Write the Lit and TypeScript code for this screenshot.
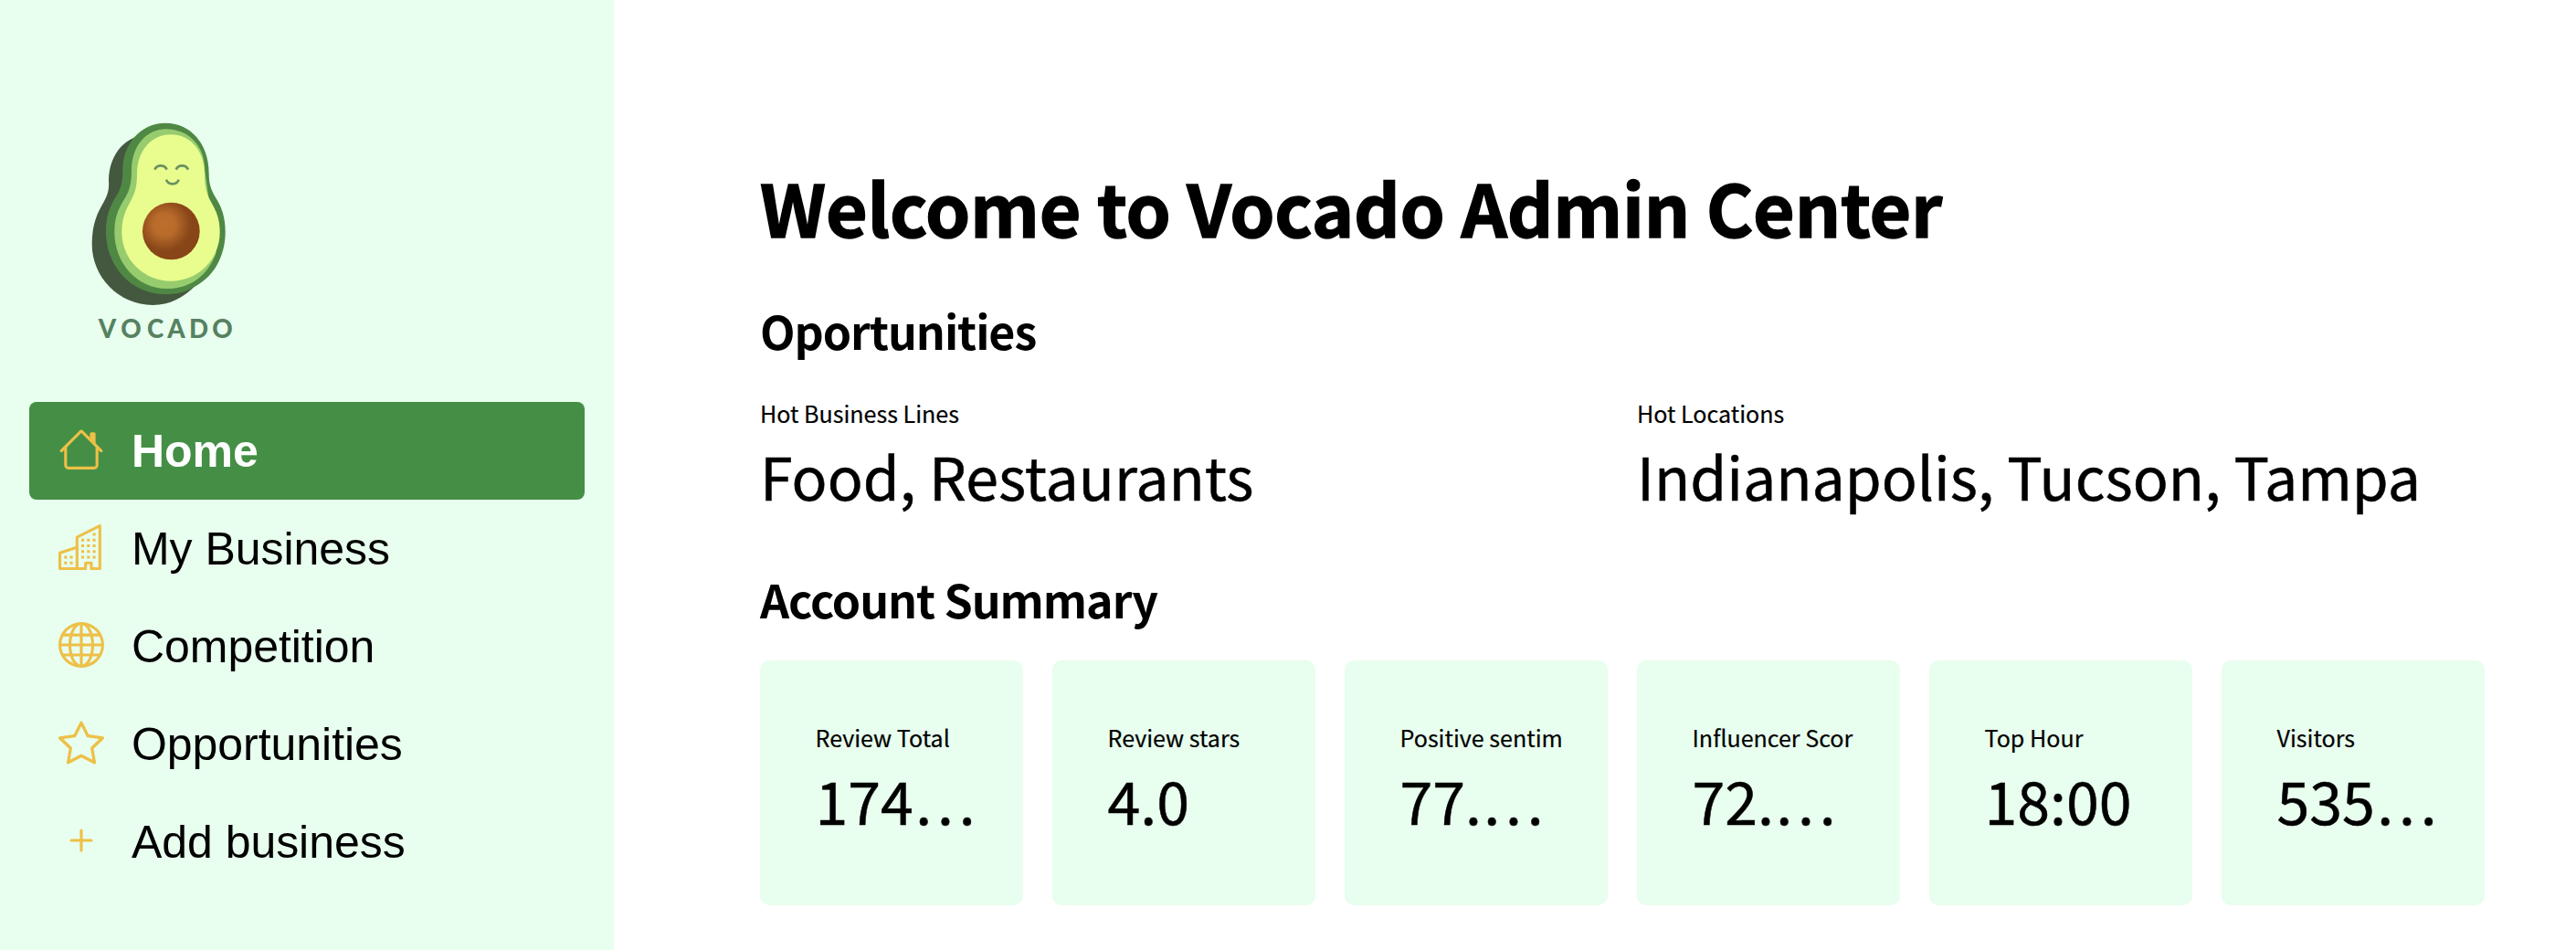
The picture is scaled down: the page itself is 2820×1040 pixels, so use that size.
import { LitElement, html, css, svg, nothing } from "lit";
import { customElement, property } from "lit/decorators.js";
import { classMap } from "lit/directives/class-map.js";

const ICONS: Record<string, string[]> = {
  house: [
    "M2 13.5V7h1v6.5a.5.5 0 0 0 .5.5h9a.5.5 0 0 0 .5-.5V7h1v6.5a1.5 1.5 0 0 1-1.5 1.5h-9A1.5 1.5 0 0 1 2 13.5zm11-11V6l-2-2V2.5a.5.5 0 0 1 .5-.5h1a.5.5 0 0 1 .5.5z",
    "M7.293 1.5a1 1 0 0 1 1.414 0l6.647 6.646a.5.5 0 0 1-.708.708L8 2.207 1.354 8.854a.5.5 0 1 1-.708-.708L7.293 1.5z",
  ],
  building: [
    "M14.763.075A.5.5 0 0 1 15 .5v15a.5.5 0 0 1-.5.5h-3a.5.5 0 0 1-.5-.5V14h-1v1.5a.5.5 0 0 1-.5.5h-9a.5.5 0 0 1-.5-.5V10a.5.5 0 0 1 .342-.474L6 7.64V4.5a.5.5 0 0 1 .276-.447l8-4a.5.5 0 0 1 .487.022zM6 8.694 1 10.36V15h5V8.694zM7 15h2v-1.5a.5.5 0 0 1 .5-.5h2a.5.5 0 0 1 .5.5V15h2V1.309l-7 3.5V15z",
    "M2 11h1v1H2v-1zm2 0h1v1H4v-1zm-2 2h1v1H2v-1zm2 0h1v1H4v-1zm4-4h1v1H8V9zm2 0h1v1h-1V9zm-2 2h1v1H8v-1zm2 0h1v1h-1v-1zm2-2h1v1h-1V9zm0 2h1v1h-1v-1zM8 7h1v1H8V7zm2 0h1v1h-1V7zm2 0h1v1h-1V7zM8 5h1v1H8V5zm2 0h1v1h-1V5zm2 0h1v1h-1V5zm0-2h1v1h-1V3z",
  ],
  globe: [
    "M0 8a8 8 0 1 1 16 0A8 8 0 0 1 0 8zm7.5-6.923c-.67.204-1.335.82-1.887 1.855A7.97 7.97 0 0 0 5.145 4H7.5V1.077zM4.09 4a9.267 9.267 0 0 1 .64-1.539 6.7 6.7 0 0 1 .597-.933A7.025 7.025 0 0 0 2.255 4H4.09zm-.582 3.5c.03-.877.138-1.718.312-2.5H1.674a6.958 6.958 0 0 0-.656 2.5h2.49zM4.847 5a12.5 12.5 0 0 0-.338 2.5H7.5V5H4.847zM8.5 5v2.5h2.99a12.495 12.495 0 0 0-.337-2.5H8.5zM4.51 8.5a12.5 12.5 0 0 0 .337 2.5H7.5V8.5H4.51zm3.99 0V11h2.653c.187-.765.306-1.608.338-2.5H8.5zM5.145 12c.138.386.295.744.468 1.068.552 1.035 1.218 1.65 1.887 1.855V12H5.145zm.182 2.472a6.696 6.696 0 0 1-.597-.933A9.268 9.268 0 0 1 4.09 12H2.255a7.024 7.024 0 0 0 3.072 2.472zM3.82 11a13.652 13.652 0 0 1-.312-2.5h-2.49c.062.89.291 1.733.656 2.5H3.82zm6.853 3.472A7.024 7.024 0 0 0 13.745 12H11.91a9.27 9.27 0 0 1-.64 1.539 6.688 6.688 0 0 1-.597.933zM8.5 12v2.923c.67-.204 1.335-.82 1.887-1.855.173-.324.33-.682.468-1.068H8.5zm3.68-1h2.146c.365-.767.594-1.61.656-2.5h-2.49a13.65 13.65 0 0 1-.312 2.5zm2.802-3.5a6.959 6.959 0 0 0-.656-2.5H12.18c.174.782.282 1.623.312 2.5h2.49zM11.27 2.461c.247.464.462.98.64 1.539h1.835a7.024 7.024 0 0 0-3.072-2.472c.218.284.418.598.597.933zM10.855 4a7.966 7.966 0 0 0-.468-1.068C9.835 1.897 9.17 1.282 8.5 1.077V4h2.355z",
  ],
  star: [
    "M2.866 14.85c-.078.444.36.791.746.593l4.39-2.256 4.389 2.256c.386.198.824-.149.746-.592l-.83-4.73 3.522-3.356c.33-.314.16-.888-.282-.95l-4.898-.696L8.465.792a.513.513 0 0 0-.927 0L5.354 5.12l-4.898.696c-.441.062-.612.636-.283.95l3.523 3.356-.83 4.73zm4.905-2.767-3.686 1.894.694-3.957a.565.565 0 0 0-.163-.505L1.71 6.745l4.052-.576a.525.525 0 0 0 .393-.288L8 2.223l1.847 3.658a.525.525 0 0 0 .393.288l4.052.575-2.906 2.77a.565.565 0 0 0-.163.506l.694 3.957-3.686-1.894a.503.503 0 0 0-.461 0z",
  ],
  plus: [
    "M8 4a.5.5 0 0 1 .5.5v3h3a.5.5 0 0 1 0 1h-3v3a.5.5 0 0 1-1 0v-3h-3a.5.5 0 0 1 0-1h3v-3A.5.5 0 0 1 8 4z",
  ],
};

@customElement("vocado-logo")
class VocadoLogo extends LitElement {
  static styles = css`
    :host { display: block; width: 200px; height: 270px; }
    .art { display: block; width: 200px; height: 270px; }
    .word {
      font-family: Lato, "Liberation Sans", sans-serif;
      font-weight: 900;
      font-size: 83px;
      fill: #558160;
    }
  `;
  render() {
    return html`<svg class="art" viewBox="0 0 600 810">
      <defs>
        <radialGradient id="pit" cx="300" cy="378" r="96" gradientUnits="userSpaceOnUse">
          <stop offset="0" stop-color="#bd6f2d" />
          <stop offset="0.38" stop-color="#b86b2a" />
          <stop offset="0.88" stop-color="#8a4719" />
          <stop offset="1" stop-color="#884517" />
        </radialGradient>
      </defs>
      <path fill="#445840" d="M250 82C180 82 117 140 117 235C119 268 112 284 96 312C76 346 62 385 62 442C62 550 150 642 262 642C318 642 362 618 400 580L440 300Z" />
      <path fill="#4f8844" d="M303 44C222 44 163 112 163 200C163 250 152 268 137 292C120 322 108 350 108 402C108 512 190 606 300 606C345 606 375 598 405 578C465 545 500 478 500 402C500 352 488 322 470 292C452 262 446 244 446 208C446 112 386 44 303 44Z" />
      <path fill="#97cc6e" d="M306 64C240 64 192 120 192 200C192 250 182 272 166 298C148 328 136 356 136 402C136 504 210 588 308 588C378 588 440 552 470 470L433 200C433 112 372 64 306 64Z" />
      <path fill="#e9fd8e" d="M321 82C256 82 210 136 210 212C210 256 202 276 188 302C172 332 160 358 160 402C160 492 232 563 321 563C412 563 482 492 482 402C482 358 470 334 456 308C440 280 432 256 432 212C432 136 386 82 321 82Z" />
      <g fill="none" stroke="#6a9160" stroke-width="8">
        <path d="M268 197C276 180 300 180 308 197" />
        <path d="M338 197C346 180 370 180 378 197" />
        <path d="M306 230C312 249 341 249 347 230" />
      </g>
      <circle cx="322" cy="399" r="94" fill="url(#pit)" />
      <text class="word" y="750" x="83 157 243 310 381 457">VOCADO</text>
    </svg>`;
  }
}

@customElement("nav-item")
class NavItem extends LitElement {
  @property() icon = "";
  @property() label = "";
  @property({ type: Boolean }) active = false;
  static styles = css`
    :host { display: block; }
    .item {
      display: flex;
      align-items: center;
      gap: 30px;
      height: 107px;
      padding: 0 32px;
      box-sizing: border-box;
      border-radius: 8px;
      color: #000;
      font-family: "Liberation Sans", Arial, sans-serif;
      font-size: 50px;
      line-height: 75px;
    }
    .active { background: #448f45; color: #fff; font-weight: 700; }
    .icon { width: 50px; height: 50px; flex: none; fill: #edc047; margin-bottom: 3px; }
    .label { white-space: nowrap; margin-top: 2px; letter-spacing: -0.05px; }
  `;
  render() {
    return html`<div class=${classMap({ item: true, active: this.active })}>
      <svg class="icon" viewBox="0 0 16 16">
        ${ICONS[this.icon].map((d) => svg`<path fill-rule="evenodd" d=${d} />`)}
      </svg>
      <span class="label">${this.label}</span>
    </div>`;
  }
}

@customElement("metric-block")
class MetricBlock extends LitElement {
  @property() label = "";
  @property() value = "";
  static styles = css`
    :host { display: block; min-width: 0; color: #000; }
    .label { font-size: 25.07px; line-height: 42px; white-space: nowrap; -webkit-text-stroke: 0.2px #000; }
    .value { font-size: 64.46px; line-height: 94px; white-space: nowrap; -webkit-text-stroke: 0.5px #000; }
    /* The CJK face centres its ellipsis, so spaced periods keep the dots on the baseline. */
    .more { letter-spacing: 5.8px; margin-left: 2.4px; }
  `;
  render() {
    const cut = this.value.endsWith("…");
    const text = cut ? this.value.slice(0, -1) : this.value;
    return html`<div class="label">${this.label}</div>
      <div class="value">${text}${cut ? html`<span class="more">...</span>` : nothing}</div>`;
  }
}

@customElement("app-root")
class AppRoot extends LitElement {
  static styles = css`
    :host {
      display: block;
      font-family: "Noto Sans CJK KR", "Noto Sans CJK SC", sans-serif;
      color: #000;
    }
    .page { display: flex; height: 1040px; background: #fff; overflow: hidden; }
    .sidebar {
      flex: none;
      width: 672px;
      box-sizing: border-box;
      padding: 120px 32px 0;
      background: #e8feee;
    }
    .logo { margin: 0 0 50px 48px; }
    .main { flex: 1; padding: 173px 100px 0 160px; min-width: 0; }
    .title {
      margin: 0 0 49px;
      font-size: 78.8px;
      line-height: 106px;
      font-weight: 700;
      letter-spacing: -0.22px;
      white-space: nowrap;
      -webkit-text-stroke: 1.4px #000;
    }
    .heading {
      margin: 0;
      font-size: 50.14px;
      line-height: 67px;
      font-weight: 600;
      letter-spacing: -1.05px;
      white-space: nowrap;
    }
    .hot { display: grid; grid-template-columns: 1fr 1fr; gap: 32px; margin: 36px 0 55px; }
    .cards { display: grid; grid-template-columns: repeat(6, 1fr); gap: 32px; margin-top: 34px; }
    .card {
      height: 268px;
      box-sizing: border-box;
      padding: 63px 0 0 60.5px;
      border-radius: 10px;
      background: #e8feee;
      min-width: 0;
    }
  `;
  private nav = [
    { icon: "house", label: "Home", active: true },
    { icon: "building", label: "My Business", active: false },
    { icon: "globe", label: "Competition", active: false },
    { icon: "star", label: "Opportunities", active: false },
    { icon: "plus", label: "Add business", active: false },
  ];
  private metrics = [
    ["Review Total", "174…"],
    ["Review stars", "4.0"],
    ["Positive sentim", "77.…"],
    ["Influencer Scor", "72.…"],
    ["Top Hour", "18:00"],
    ["Visitors", "535…"],
  ];
  render() {
    return html`<div class="page">
      <aside class="sidebar">
        <vocado-logo class="logo"></vocado-logo>
        <nav>
          ${this.nav.map(
            (n) => html`<nav-item .icon=${n.icon} .label=${n.label} .active=${n.active}></nav-item>`
          )}
        </nav>
      </aside>
      <main class="main">
        <h1 class="title">Welcome to Vocado Admin Center</h1>
        <h2 class="heading">Oportunities</h2>
        <section class="hot">
          <metric-block label="Hot Business Lines" value="Food, Restaurants"></metric-block>
          <metric-block label="Hot Locations" value="Indianapolis, Tucson, Tampa"></metric-block>
        </section>
        <h2 class="heading">Account Summary</h2>
        <section class="cards">
          ${this.metrics.map(
            ([l, v]) => html`<div class="card"><metric-block .label=${l} .value=${v}></metric-block></div>`
          )}
        </section>
      </main>
    </div>`;
  }
}
